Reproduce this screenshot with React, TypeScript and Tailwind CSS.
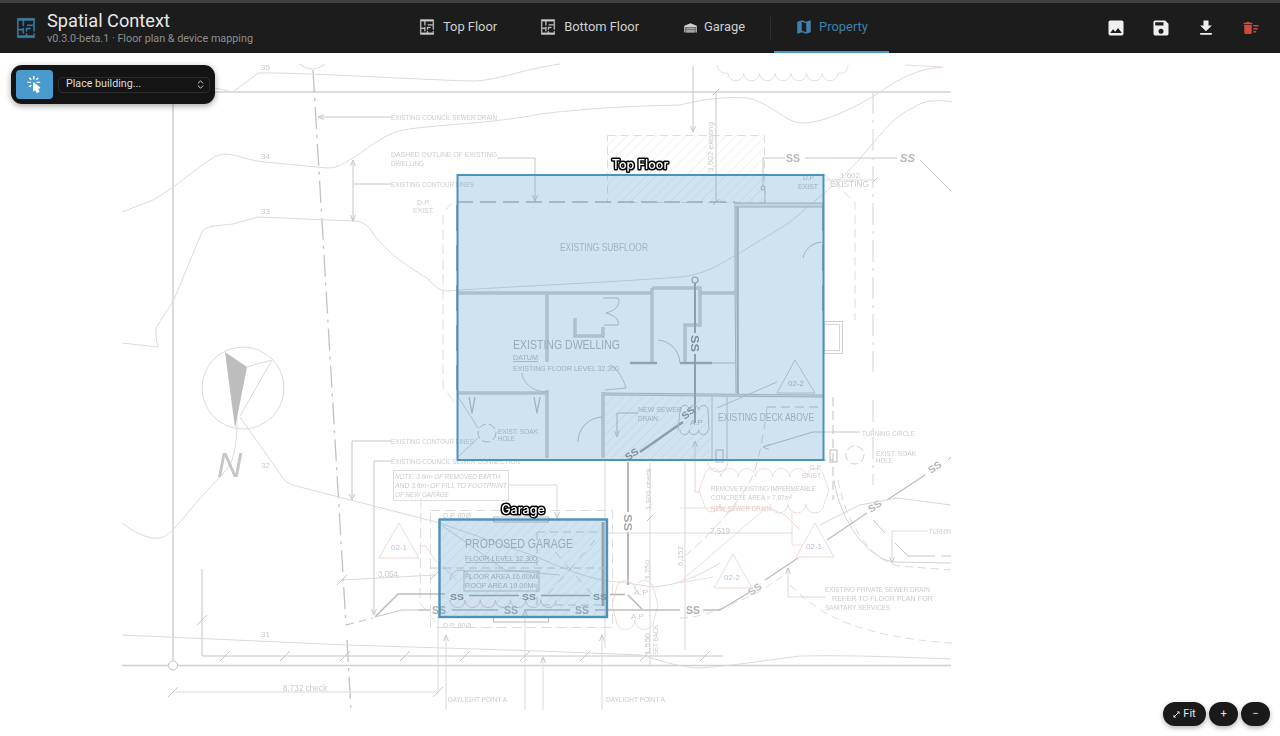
import React from "react";
import { ChevronsUpDown } from "lucide-react";

const P = {
  plan: "M10,5V10H9V5H5V13H9V12H10V17H9V14H5V19H12V17H13V19H19V17H20V21H4V3H20V15H19V10H13V9H19V5H10ZM12,12H16V13H13V15H12Z",
  garage: "M22 9V20H20V11H4V20H2V9L12 5L22 9M19 12H5V14H19V12M19 18H5V20H19V18M19 15H5V17H19V15Z",
  map: "M15,19L9,16.89V5L15,7.11M20.5,3C20.44,3 20.39,3 20.34,3L15,5.1L9,3L3.36,4.9C3.15,4.97 3,5.15 3,5.38V20.5A0.5,0.5 0 0,0 3.5,21L3.66,20.97L9,18.9L15,21L20.64,19.1C20.85,19 21,18.85 21,18.62V3.5A0.5,0.5 0 0,0 20.5,3Z",
  image: "M8.5,13.5L11,16.5L14.5,12L19,18H5M21,19V5C21,3.89 20.1,3 19,3H5A2,2 0 0,0 3,5V19A2,2 0 0,0 5,21H19A2,2 0 0,0 21,19Z",
  save: "M15,9H5V5H15M12,19A3,3 0 0,1 9,16A3,3 0 0,1 12,13A3,3 0 0,1 15,16A3,3 0 0,1 12,19M17,3H5C3.89,3 3,3.9 3,5V19A2,2 0 0,0 5,21H19A2,2 0 0,0 21,19V7L17,3Z",
  download: "M5,20H19V18H5M19,9H15V3H9V9H5L12,16L19,9Z",
  sweep: "M15,16H19V18H15V16M15,8H22V10H15V8M15,12H21V14H15V12M3,18A2,2 0 0,0 5,20H11A2,2 0 0,0 13,18V8H3V18M14,5H11L10,4H6L5,5H2V7H14V5Z",
  click: "M10.76,8.69A0.76,0.76 0 0,0 10,9.45V20.9C10,21.32 10.34,21.66 10.76,21.66C10.95,21.66 11.11,21.6 11.24,21.5L13.15,19.95L14.81,23.57C14.94,23.84 15.21,24 15.5,24C15.61,24 15.72,24 15.83,23.92L18.59,22.64C18.97,22.46 19.15,22 18.95,21.63L17.28,18L19.69,17.55C19.85,17.5 20,17.43 20.12,17.29C20.39,16.97 20.35,16.5 20,16.21L11.26,8.86L11.25,8.87C11.12,8.76 10.95,8.69 10.76,8.69M15,10V8H20V10H15M13.83,4.76L16.66,1.93L18.07,3.34L15.24,6.17L13.83,4.76M10,0H12V5H10V0M3.93,14.66L6.76,11.83L8.17,13.24L5.34,16.07L3.93,14.66M3.93,3.34L5.34,1.93L8.17,4.76L6.76,6.17L3.93,3.34M7,10H2V8H7V10",
};

function Icon({ d, size, className, bold }: { d: string; size: number; className?: string; bold?: boolean }) {
  return (
    <svg width={size} height={size} viewBox="0 0 24 24" className={className} fill="currentColor" stroke={bold ? "currentColor" : undefined} strokeWidth={bold ? 0.4 : undefined}>
      <path d={d} />
    </svg>
  );
}

function Tab({ icon, size, label, active, className }: { icon: string; size: number; label: string; active?: boolean; className: string }) {
  return (
    <div className={`flex h-full items-center gap-[6px] border-b-2 text-[12.9px] ${active ? "border-[#4a96c4] text-[#3f81ab]" : "border-transparent text-[#cfcfcf]"} ${className}`}>
      <Icon d={P[icon as keyof typeof P]} size={size} bold={icon === "plan"} />
      <span>{label}</span>
    </div>
  );
}

const LINE = "#dadada";
const MID = "#c6c6c6";
const PINK = "#efdcd8";
const TXT = "#cbcbcb";

function L({ p, c = LINE, w = 1, dash }: { p: string; c?: string; w?: number; dash?: string }) {
  return <polyline points={p} fill="none" stroke={c} strokeWidth={w} strokeDasharray={dash} strokeLinejoin="round" />;
}
function W({ p, w = 3 }: { p: string; w?: number }) {
  return (
    <>
      <polyline points={p} fill="none" stroke="#bababa" strokeWidth={w} strokeLinejoin="miter" />
      <polyline points={p} fill="none" stroke="#e8e8e8" strokeWidth={w - 2} strokeLinejoin="miter" />
    </>
  );
}
function C({ d, c = LINE, w = 1, dash }: { d: string; c?: string; w?: number; dash?: string }) {
  return <path d={d} fill="none" stroke={c} strokeWidth={w} strokeDasharray={dash} />;
}
function T({ x, y, w, s = 8, c = TXT, rot, t, italic, u, b }: { x: number; y: number; w?: number; s?: number; c?: string; rot?: number; t: string; italic?: boolean; u?: boolean; b?: boolean }) {
  return (
    <text
      x={x}
      y={y}
      fontSize={s}
      fill={c}
      fontStyle={italic ? "italic" : undefined}
      fontWeight={b ? 700 : undefined}
      textDecoration={u ? "underline" : undefined}
      textLength={w}
      lengthAdjust={w ? "spacingAndGlyphs" : undefined}
      transform={rot !== undefined ? `rotate(${rot} ${x} ${y})` : undefined}
    >
      {t}
    </text>
  );
}
function Scallop({ x1, x2, y, n, up, c = PINK }: { x1: number; x2: number; y: number; n: number; up?: boolean; c?: string }) {
  const step = (x2 - x1) / n;
  let d = `M${x1},${y}`;
  for (let i = 0; i < n; i++) d += ` a${step / 2},${step / 2} 0 0 ${up ? 1 : 0} ${step},0`;
  return <path d={d} fill="none" stroke={c} strokeWidth={1} />;
}
function Tick({ x, y, s = 5, c = MID }: { x: number; y: number; s?: number; c?: string }) {
  return <line x1={x - s} y1={y + s} x2={x + s} y2={y - s} stroke={c} strokeWidth={1} />;
}
function Arrow({ x, y, dir = "down" }: { x: number; y: number; dir?: "down" | "up" | "left" }) {
  const pts =
    dir === "down" ? `${x - 2.5},${y - 6} ${x},${y} ${x + 2.5},${y - 6}` : dir === "up" ? `${x - 2.5},${y + 6} ${x},${y} ${x + 2.5},${y + 6}` : `${x + 6},${y - 2.5} ${x},${y} ${x + 6},${y + 2.5}`;
  return <polyline points={pts} fill="none" stroke={MID} strokeWidth={1} />;
}
function Label({ x, y, t }: { x: number; y: number; t: string }) {
  return (
    <text x={x} y={y} textAnchor="middle" fontSize={12.6} fontWeight={500} fill="#ffffff" stroke="#000000" strokeWidth={3} strokeLinejoin="round" className="font-['Inter',sans-serif] [paint-order:stroke]">
      {t}
    </text>
  );
}

function Plan() {
  const ticks = [225, 285, 345, 405, 465, 525, 585, 645, 705];
  return (
    <svg viewBox="0 53 1280 683" className="block h-full w-full font-['Liberation_Sans',sans-serif] blur-[0.5px]">
      <defs>
        <pattern id="hatch" width="7" height="7" patternUnits="userSpaceOnUse" patternTransform="rotate(45)">
          <line x1="0" y1="0" x2="0" y2="7" stroke="#e6e6e6" strokeWidth="1" />
        </pattern>
      </defs>
      <rect x="607" y="135" width="158" height="67" fill="url(#hatch)" />
      <rect x="605" y="397" width="105" height="63" fill="url(#hatch)" />
      <rect x="439" y="519" width="168" height="98" fill="url(#hatch)" />

      <L p="122,92 951,92" c="#d2d2d2" w={1.5} />
      <L p="122,665.5 951,665.5" c="#cfcfcf" w={1.5} />
      <L p="173,104 173,660" c="#d0d0d0" w={1.5} />
      <circle cx="173" cy="665.5" r="4.5" fill="#fff" stroke="#bdbdbd" />
      <L p="202,569 202,656 723,656" c={MID} />
      {ticks.map((x) => (
        <Tick key={x} x={x} y={656} />
      ))}
      <Tick x={202} y={620} />
      <L p="313,70 346,625" c="#c2c2c2" w={1.3} dash="22 6 3 6" />
      <L p="347,640 351,710" c="#c2c2c2" w={1.3} dash="22 6 3 6" />
      <L p="346,625 373,618" c="#c2c2c2" w={1.2} dash="8 5" />
      <C d="M299,64 Q313,74 325,64" />

      <C d="M215,88 L233,92 L258,73 C300,72 420,80 473,81 C495,81 520,70 560,64" />
      <C d="M122,212 L153,200 C190,178 210,154 225,154 C235,154 250,161 265,162 L327,168 C340,168 345,162 353,158 C375,143 385,134 403,130 C430,125 500,123 540,114 C600,107 640,106 680,105 C700,100 725,96 747,98 C770,102 785,123 803,123 C825,123 860,105 880,92 C900,78 920,68 943,67" />
      <C d="M122,343 L158,347 C155,335 155,328 158,325 C165,312 172,305 175,297 L202,232 C207,225 217,226 233,224 L258,217 L353,221 C362,221 368,225 372,232 C385,250 400,262 427,278 C437,288 440,291 447,291 C500,287 600,283 680,277 C710,274 725,260 740,253 C760,240 775,232 790,222 L830,188 C845,175 855,165 863,155 C880,135 895,115 913,108 C925,99 940,100 952,102" />
      <C d="M122,523 C135,533 150,540 160,538 C170,535 175,528 190,510 C205,492 220,478 230,465 C237,450 237,430 237,417" />
      <C d="M240,417 L283,478 C287,484 293,485 300,487 L440,523 L480,537 L537,557 C570,572 600,582 620,582 L653,587 C680,585 700,575 720,563" />
      <C d="M122,635 L347,645 L540,651 L640,655 C660,660 680,668 700,668 C730,666 770,660 800,656 C850,655 900,657 951,659" />

      <circle cx="243" cy="388" r="41" fill="none" stroke={LINE} />
      <polygon points="225,352 247,367 235,428" fill="#bdbdbd" />
      <L p="247,367 272,360 240,416" />
      <T x={217} y={477} s={35} c="#c6c6c6" t="N" italic />

      <T x={261} y={70} s={8} t="35" />
      <T x={261} y={159} s={8} t="34" />
      <T x={261} y={214} s={8} t="33" />
      <T x={261} y={468} s={8} t="32" />
      <T x={261} y={637} s={8} t="31" />
      <T x={391} y={120} w={106} s={7.5} t="EXISTING COUNCIL SEWER DRAIN" />
      <L p="318,117 391,117" c={MID} />
      <Arrow x={318} y={117} dir="left" />
      <T x={391} y={157} w={106} s={7.5} t="DASHED OUTLINE OF EXISTING" />
      <T x={391} y={166} w={33} s={7.5} t="DWELLING" />
      <L p="497,158 535,158 535,201" c={MID} />
      <Arrow x={535} y={201} />
      <T x={391} y={187} w={83} s={7.5} t="EXISTING CONTOUR LINES" />
      <L p="353,184 391,184" c={MID} />
      <L p="353,160 353,221" c={MID} />
      <Arrow x={353} y={160} dir="up" />
      <Arrow x={353} y={221} />
      <T x={417} y={205} w={13} s={8} t="D.P." />
      <T x={413} y={213} w={21} s={8} t="EXIST." />
      <L p="452,203 443,213 443,387 455,403" c="#dcdcdc" dash="10 5" />
      <T x={391} y={444} w={83} s={7.5} t="EXISTING CONTOUR LINES" />
      <L p="391,441 352,441 352,498" c={MID} />
      <Arrow x={352} y={500} />
      <T x={391} y={464} w={129} s={7.5} t="EXISTING COUNCIL SEWER CONNECTION" />
      <L p="391,461 374,461 374,613" c={MID} />
      <Arrow x={374} y={615} />
      <rect x="393.5" y="470.5" width="115" height="30" fill="none" stroke="#dddddd" />
      <T x={395} y={479} w={105} s={7} italic t="NOTE: 3.6m³ OF REMOVED EARTH" />
      <T x={395} y={488} w={112} s={7} italic t="AND 3.6m³ OF FILL TO FOOTPRINT" />
      <T x={395} y={497} w={54} s={7} italic t="OF NEW GARAGE" />
      <L p="508,485 557,485 557,516" />
      <Arrow x={557} y={518} />
      <L p="421,498 420,603 438,625" c="#dcdcdc" dash="10 5" />
      <rect x="430.5" y="510.5" width="182" height="117" fill="none" stroke="#dcdcdc" strokeDasharray="10 5" />
      <T x={443} y={518} w={28} s={8} t="D.P. 80Ø" />
      <T x={443} y={628} w={28} s={8} t="D.P. 80Ø" />

      <polygon points="399,523 379,558 419,558" fill="#fff" stroke="#efd9d9" />
      <T x={391} y={550} s={8} c="#bcc2de" t="02-1" />
      <L p="419,546 426,546 435,560 457,580" c={PINK} />
      <T x={378} y={577} w={20} s={8.5} t="3,054" />
      <L p="342,580 435,575" />
      <Tick x={342} y={580} />
      <Tick x={435} y={575} />
      <L p="375,617 398,594 445,594" c="#bcbcbc" w={1.6} />
      <L p="375,617 402,610 430,610" c={MID} />

      <L p="173,692 438,692" />
      <Tick x={173} y={692} />
      <Tick x={438} y={692} />
      <L p="438,610 438,692" />
      <T x={283} y={691} w={44} s={8.5} t="8,732 check" />
      <L p="446,637 446,710" />
      <L p="525,612 525,710" />
      <L p="543,659 543,710" />
      <L p="602,637 602,710" />
      <Arrow x={446} y={635} dir="up" />
      <Arrow x={525} y={610} dir="up" />
      <Arrow x={543} y={657} dir="up" />
      <Arrow x={602} y={635} dir="up" />
      <T x={448} y={702} w={59} s={7.5} t="DAYLIGHT POINT A" />
      <T x={606} y={702} w={59} s={7.5} t="DAYLIGHT POINT A" />

      <C d="M717,65 C718,71 722,74 728,73" c={PINK} />
      <Scallop x1={728} x2={838} y={73} n={7} />
      <C d="M838,73 C844,74 848,71 848,65" c={PINK} />
      <L p="905,65 943,67" c={PINK} />
      <L p="693,66 693,130" c={MID} />
      <Arrow x={693} y={132} />
      <rect x="607.5" y="135.5" width="157" height="67" fill="none" stroke="#dcdcdc" strokeDasharray="8 5" />
      <L p="716,92 716,202" c={MID} />
      <Tick x={716} y={92} s={3} />
      <Tick x={716} y={202} s={3} />
      <T x={713} y={172} w={50} s={8} rot={-90} t="3,602 existing" />
      <L p="763,188 763,158 785,158" c={MID} />
      <L p="765,190 765,203" c={MID} />
      <circle cx="763" cy="188" r="2" fill="#fff" stroke="#aaaaaa" />
      <T x={786} y={162} w={14} s={10} b c="#b9b9b9" t="SS" />
      <L p="805,158 897,158" c={MID} />
      <T x={900} y={162} w={15} s={10} b c="#b9b9b9" italic t="SS" />
      <L p="920,160 951,191" c={MID} />
      <T x={840} y={178} w={20} s={8} t="1:602" />
      <T x={830} y={187} w={39} s={8.5} t="EXISTING" />
      <L p="825,180 875,180" />
      <Tick x={875} y={180} s={3} />
      <L p="823,173 855,202 855,320" c="#dcdcdc" dash="9 5" />
      <L p="873,92 873,372" c="#dddddd" w={1.2} dash="22 6 3 6" />
      <L p="873,400 873,485" c="#dddddd" w={1.2} dash="22 6 3 6" />
      <rect x="824.5" y="321.5" width="18" height="32" fill="none" stroke="#cfcfcf" />
      <rect x="824.5" y="324.5" width="15" height="26" fill="none" stroke="#d6d6d6" />

      <L p="457,202 735,202" c="#b4b4b4" w={1.3} dash="16 7" />
      <W p="457,293 652,293" />
      <W p="700,293 736,293" />
      <W p="736,202 736,293 737,393" />
      <W p="735,205 824,205" w={5} />
      <L p="738,207 738,396" c="#b0b0b0" w={1.4} />
      <W p="547,295 547,362" />
      <W p="547,390 547,458" />
      <W p="603,392 603,458" />
      <W p="575,318 575,336 603,336 603,327" />
      <W p="652,288 652,363" />
      <W p="652,288 700,288 700,325 685,325 685,363" />
      <L p="630,363 657,363" c="#a9a9a9" w={2.4} />
      <L p="680,363 712,363" c="#a9a9a9" w={2.4} />
      <L p="712,363 735,363" c="#bcbcbc" />
      <W p="457,393 547,393" />
      <W p="603,394 823,396" />
      <L p="469,397 472,413 475,397" c="#bdbdbd" w={1.3} />
      <L p="534,397 537,413 540,397" c="#bdbdbd" w={1.3} />
      <C d="M658,340 A24,24 0 0,1 680,363" c="#bcbcbc" />
      <C d="M578,442 A25,25 0 0,1 603,417" c="#bcbcbc" />
      <C d="M803,258 A20,20 0 0,1 823,242" c="#bcbcbc" />
      <C d="M603,298 L618,298 C622,306 612,312 606,313 C614,315 620,320 618,325 L604,325" c="#bcbcbc" />
      <C d="M548,392 C530,392 522,380 522,373" c="#c4c4c4" />
      <C d="M605,390 L626,388 C622,375 616,368 610,365" c="#c4c4c4" />
      <circle cx="487" cy="433" r="9" fill="none" stroke="#bcbcbc" strokeDasharray="8 3" />
      <C d="M457,395 L478,428 M478,438 L457,458" c="#cdcdcd" />
      <L p="712,397 712,460" c="#c6c6c6" />
      <L p="727,397 727,460" c="#c6c6c6" />
      <L p="767,407 823,407" c="#c2c2c2" dash="9 5" />
      <C d="M767,407 C765,425 762,445 755,470 C745,500 700,545 680,560" c="#d6d6d6" dash="9 5" />
      <L p="833,397 833,500" c="#cfcfcf" w={1.3} dash="9 5" />
      <L p="457,460 833,460" c="#c9c9c9" w={1.3} dash="12 5" />
      <rect x="716" y="450" width="7" height="12" fill="none" stroke="#bababa" />
      <rect x="830" y="450" width="7" height="12" fill="none" stroke="#bababa" />
      <circle cx="855" cy="455" r="9" fill="none" stroke="#cfcfcf" strokeDasharray="8 3" />
      <C d="M708,462 A10,10 0 0,0 728,462" />
      <L p="823,205 823,320" c="#adadad" w={2} dash="26 14" />
      <L p="457,205 457,390" c="#adadad" w={2} dash="26 14" />

      <polygon points="795,360 777,393 815,393" fill="none" stroke="#cacaca" />
      <L p="777,382 717,408" c="#c8c8c8" />
      <L p="813,432 763,447" c="#bcbcbc" />
      <Arrow x={763} y={447} dir="left" />
      <L p="813,432 860,432" c={MID} />
      <L p="617,413 638,413" c="#b8b8b8" />
      <L p="617,413 617,435" c="#b8b8b8" />
      <Arrow x={617} y={437} />

      <circle cx="695" cy="280" r="3" fill="none" stroke="#a4a4a4" strokeWidth="1.2" />
      <L p="695,283 695,333" c="#a4a4a4" w={2} />
      <T x={690.5} y={335} w={17} s={11} b c="#8f8f8f" rot={90} t="SS" />
      <L p="695,354 695,423" c="#a4a4a4" w={2} />
      <L p="683,422 640,452" c="#a4a4a4" w={2.5} />
      <T x={628} y={461} w={14} s={10} b c="#909090" rot={-35} t="SS" />
      <T x={685} y={420} w={14} s={10} b c="#909090" rot={-40} t="SS" />
      <Scallop x1={680} x2={708} y={410} n={3} up c="#bcc4ca" />
      <Scallop x1={680} x2={708} y={430} n={3} c="#bcc4ca" />
      <L p="680,410 678,430" c="#bcc4ca" />
      <L p="708,410 709,430" c="#bcc4ca" />
      <T x={690} y={425} s={8} t="A.P" c="#b7b7b7" />
      <L p="628,462 628,512" c="#b6b6b6" w={2} />
      <T x={623.5} y={514} w={17} s={11} b c="#a8a8a8" rot={90} t="SS" />
      <L p="628,532 628,585" c="#b6b6b6" w={2} />
      <L p="628,595 642,609" c="#b8b8b8" w={1.5} />
      <L p="605,460 605,648" />
      <L p="650,463 650,667" c="#dadada" />
      <L p="685,460 685,650" />
      <L p="695,443 695,492 700,492" c="#d8d8d8" />
      <Arrow x={695} y={441} dir="up" />
      <T x={651} y={510} w={42} s={8} rot={-90} t="1,900 check" />
      <Tick x={650} y={518} s={3} />
      <T x={650} y={580} w={20} s={8} rot={-90} t="3,250" />
      <T x={650} y={655} w={22} s={8} rot={-90} t="1,550" />
      <T x={658} y={655} w={30} s={8} rot={-90} t="SET BACK" />
      <T x={683} y={566} w={20} s={8} rot={-90} t="6,152" />
      <L p="606,533 793,533" />
      <T x={710} y={534} w={20} s={8.5} t="7,519" />
      <L p="792,512 792,545 803,545" c={PINK} />

      <Scallop x1={704} x2={824} y={477} n={7} up />
      <Scallop x1={704} x2={736} y={504} n={2} />
      <Scallop x1={770} x2={824} y={504} n={3} />
      <L p="704,477 699,490 704,504" c={PINK} />
      <L p="824,477 829,490 824,504" c={PINK} />
      <T x={711} y={491} w={105} s={7.5} t="REMOVE EXISTING IMPERMEABLE" />
      <T x={711} y={500} w={81} s={7.5} t="CONCRETE AREA = 7.87m²" />
      <T x={711} y={511} w={60} s={7.5} c="#e3c9c5" t="NEW SEWER DRAIN" />
      <L p="680,508 770,508 785,515 800,530" c={PINK} />
      <L p="680,582 767,507" c={PINK} />
      <T x={810} y={470} w={12} s={8} t="D.P." />
      <T x={802} y={478} w={20} s={8} t="EXIST." />
      <Scallop x1={616} x2={654} y={590} n={2} up />
      <Scallop x1={616} x2={654} y={620} n={2} />
      <L p="616,590 612,605 616,620" c={PINK} />
      <L p="654,590 658,605 654,620" c={PINK} />
      <T x={634} y={595} w={14} s={8} t="A.P" />
      <T x={631} y={619} w={14} s={8} t="A.P." />
      <Scallop x1={450} x2={556} y={600} n={7} c="#e0c9c4" />
      <Scallop x1={450} x2={470} y={580} n={1} up c="#e0c9c4" />

      <T x={862} y={436} w={53} s={7.5} t="TURNING CIRCLE" />
      <T x={876} y={456} w={40} s={7.5} t="EXIST. SOAK" />
      <T x={876} y={463} w={17} s={7.5} t="HOLE" />
      <L p="873,520 885,533" c={MID} />
      <L p="892,563 892,531 928,531" c={LINE} />
      <Arrow x={892} y={563} />
      <T x={929} y={534} w={22} s={7.5} t="TURNIN" />
      <L p="895,543 908,556 923,556" c={MID} />
      <L p="923,556 951,556" c={MID} dash="12 6" />
      <C d="M834,480 C838,510 860,555 893,562 L951,563" c="#d2d2d2" />
      <C d="M838,480 C845,520 870,562 900,566 L951,570" c="#d8d8d8" dash="8 5" />
      <T x={825} y={592} w={105} s={7.5} t="EXISTING PRIVATE SEWER DRAIN" />
      <T x={832} y={601} w={101} s={7.5} t="REFER TO FLOOR PLAN FOR" />
      <T x={825} y={610} w={65} s={7.5} t="SANITARY SERVICES" />
      <L p="788,570 788,597 825,597" c={LINE} />
      <Arrow x={788} y={568} dir="up" />
      <C d="M790,585 C805,600 820,610 833,617 C860,630 900,640 952,643" c="#dcdcdc" dash="8 5" />
      <C d="M680,618 C700,618 720,610 757,593 C770,585 780,578 787,573" c="#dcdcdc" dash="8 5" />

      <L p="703,610 720,610 750,592" c="#bdbdbd" w={1.3} />
      <T x={751} y={596} w={14} s={10} b c="#bbbbbb" rot={-35} t="SS" />
      <L p="765,580 798,558" c="#bdbdbd" w={1.3} />
      <polygon points="815,523 796,557 834,557" fill="#fff" stroke="#efd9d9" />
      <T x={806} y={549} s={8} c="#bcc2de" t="02-1" />
      <L p="827,540 867,513" c="#bdbdbd" w={1.3} />
      <T x={871} y={513} w={14} s={10} b c="#b5b5b5" rot={-35} t="SS" />
      <L p="887,500 925,475" c="#bdbdbd" w={1.3} />
      <T x={931} y={474} w={14} s={10} b c="#b5b5b5" rot={-35} t="SS" />
      <L p="948,460 951,457" c="#bdbdbd" />
      <polygon points="733,554 714,588 752,588" fill="#fff" stroke="#efd9d9" />
      <T x={724} y={580} s={8} c="#bcc2de" t="02-2" />
      <L p="680,583 713,577" c={PINK} />
      <L p="820,525 860,505 897,498 951,505" c="#d6d6d6" />
      <L p="418,610 430,610" c="#c0c0c0" />
      <T x={432} y={614} w={14} s={10.5} b c="#b0b0b0" t="SS" />
      <L p="452,610 498,610" c="#bdbdbd" w={1.3} />
      <T x={504} y={614} w={14} s={10.5} b c="#b0b0b0" t="SS" />
      <L p="524,610 570,610" c="#bdbdbd" w={1.3} />
      <T x={575} y={614} w={14} s={10.5} b c="#b0b0b0" t="SS" />
      <L p="595,610 680,610" c="#bdbdbd" w={1.3} />
      <T x={686} y={614} w={14} s={10.5} b c="#b0b0b0" t="SS" />

      <L p="610,594.5 625,594.5" c="#b5b5b5" w={1.6} />
      <rect x="493.5" y="517" width="55" height="5" fill="none" stroke="#bababa" />
      <rect x="493.5" y="617" width="55" height="5" fill="none" stroke="#bababa" />
      <L p="603,522 603,606" c="#adadad" w={3} />
      <L p="430,568 612,568" c="#cacaca" dash="8 5" />
      <L p="537,532 602,532" c="#cacaca" dash="8 5" />
      <L p="537,532 537,605 602,605" c="#cacaca" dash="8 5" />
      <L p="545,540 595,598" c="#cfcfcf" dash="8 8" />
      <L p="595,540 545,598" c="#cfcfcf" dash="8 8" />
      <L p="440,524 505,570 560,575" c="#d2d2d2" />
      <L p="469,595.5 519,595.5" c="#a9a9a9" w={1.6} />
      <L p="541,595.5 590,595.5" c="#a9a9a9" w={1.6} />
      <T x={450} y={600} w={14} s={9.5} b c="#8f8f8f" t="SS" />
      <T x={522} y={600} w={14} s={9.5} b c="#8f8f8f" t="SS" />
      <T x={593} y={600} w={14} s={9.5} b c="#8f8f8f" t="SS" />
      <T x={465} y={548} w={108} s={12.5} t="PROPOSED GARAGE" c="#b4b4b4" />
      <T x={465} y={561} w={72} s={8} t="FLOOR LEVEL 32.300" c="#b4b4b4" u />
      <rect x="464" y="571" width="75" height="20" fill="none" stroke="#c0c0c0" />
      <T x={465} y={579} w={73} s={7} t="FLOOR AREA 16.00M²" c="#b4b4b4" />
      <T x={465} y={588} w={71} s={7} t="ROOF AREA 19.00M²" c="#b4b4b4" />

      <T x={560} y={251} w={88} s={10} c="#c0c0c0" t="EXISTING SUBFLOOR" />
      <T x={513} y={349} w={107} s={13.5} c="#b4b4b4" t="EXISTING DWELLING" />
      <T x={513} y={360} w={25} s={8} c="#b8b8b8" u t="DATUM" />
      <T x={513} y={371} w={106} s={8} c="#b8b8b8" t="EXISTING FLOOR LEVEL 32.300" />
      <T x={638} y={412} w={44} s={7.5} c="#b8b8b8" t="NEW SEWER" />
      <T x={638} y={421} w={20} s={7.5} c="#b8b8b8" t="DRAIN" />
      <T x={718} y={421} w={96} s={10} c="#b8b8b8" t="EXISTING DECK ABOVE" />
      <T x={498} y={434} w={40} s={7.5} c="#bcbcbc" t="EXIST. SOAK" />
      <T x={498} y={441} w={17} s={7.5} c="#bcbcbc" t="HOLE" />
      <T x={788} y={386} s={8} c="#a9b6d8" t="02-2" />
      <T x={803} y={180} w={12} s={8} c="#bbbbbb" t="D.P." />
      <T x={798} y={189} w={20} s={8} c="#bbbbbb" t="EXIST" />

      <rect x="457.5" y="175" width="366" height="285" fill="#3f8fc4" fillOpacity="0.25" stroke="#4c92bc" strokeWidth="2" />
      <rect x="439.5" y="519.5" width="167.5" height="97.5" fill="#3f8fc4" fillOpacity="0.25" stroke="#4c92bc" strokeWidth="2.4" />
      <Label x={640} y={168.5} t="Top Floor" />
      <Label x={523} y={513.5} t="Garage" />
    </svg>
  );
}

export default function App() {
  return (
    <div className="flex h-[736px] w-full flex-col overflow-hidden bg-white font-['Roboto',sans-serif]">
      <div className="h-[3px] shrink-0 bg-[#404040]" />
      <header className="flex h-[50px] shrink-0 items-center bg-[#1c1c1c]">
        <div className="flex w-[396px] shrink-0 items-center">
          <Icon d={P.plan} size={26} bold className="ml-[13px] text-[#3a7fa8]" />
          <div className="ml-[8px] flex flex-col">
            <span className="text-[18.2px] leading-[22px] text-[#e8e8e8]">Spatial Context</span>
            <span className="text-[10.8px] leading-[14px] text-[#8f8f8f]">v0.3.0-beta.1 · Floor plan &amp; device mapping</span>
          </div>
        </div>
        <nav className="flex h-full items-center">
          <Tab icon="plan" size={20} label="Top Floor" className="pl-[21px] pr-[21px]" />
          <Tab icon="plan" size={20} label="Bottom Floor" className="pl-[20px] pr-[22px]" />
          <Tab icon="garage" size={15} label="Garage" className="pl-[22px] pr-[22px]" />
          <div className="mx-[3px] h-[22px] w-px bg-[#2f2f2f]" />
          <Tab icon="map" size={18} label="Property" active className="pl-[21px] pr-[21px]" />
        </nav>
        <div className="ml-auto flex items-center pr-[7px] text-[#efefef]">
          <button className="flex w-[45px] justify-center"><Icon d={P.image} size={20} /></button>
          <button className="flex w-[45px] justify-center"><Icon d={P.save} size={20} /></button>
          <button className="flex w-[45px] justify-center"><Icon d={P.download} size={20} /></button>
          <button className="flex w-[45px] justify-center text-[#cf4a3c]"><Icon d={P.sweep} size={18} /></button>
        </div>
      </header>
      <main className="relative min-h-0 flex-1 bg-white">
        <Plan />
        <div className="absolute left-[11px] top-[12px] flex h-[39px] w-[204px] items-center gap-[5px] rounded-[11px] bg-[#141414] pl-[5px] pr-[5px] shadow-[0_2px_6px_rgba(0,0,0,0.35)]">
          <div className="flex h-[29px] w-[37px] items-center justify-center rounded-[4px] bg-[#4a9bcd] text-white">
            <Icon d={P.click} size={17} />
          </div>
          <div className="flex h-[16px] flex-1 items-center justify-between rounded-[4px] border border-[#2c2c2c] pl-[7px] pr-[3px] text-[10.7px] text-[#dedede]">
            <span>Place building...</span>
            <ChevronsUpDown size={11} strokeWidth={2} className="text-[#e5e5e5]" />
          </div>
        </div>
        <div className="absolute bottom-[10px] right-[10px] flex items-center gap-[3px] text-[#e5e5e5]">
          <button className="flex h-[24px] w-[43px] items-center justify-center gap-[3px] rounded-full bg-[#1a1a1a] text-[11px] shadow-[0_2px_5px_rgba(0,0,0,0.3)]">
            <svg width="7" height="7" viewBox="0 0 8 8" fill="none" stroke="currentColor" strokeWidth="1">
              <path d="M1,7 L7,1 M4.5,1 H7 V3.5 M1,4.5 V7 H3.5" />
            </svg>
            <span>Fit</span>
          </button>
          <button className="flex h-[24px] w-[29px] items-center justify-center rounded-full bg-[#1a1a1a] text-[11px] shadow-[0_2px_5px_rgba(0,0,0,0.3)]">+</button>
          <button className="flex h-[24px] w-[29px] items-center justify-center rounded-full bg-[#1a1a1a] text-[11px] shadow-[0_2px_5px_rgba(0,0,0,0.3)]">−</button>
        </div>
      </main>
    </div>
  );
}
